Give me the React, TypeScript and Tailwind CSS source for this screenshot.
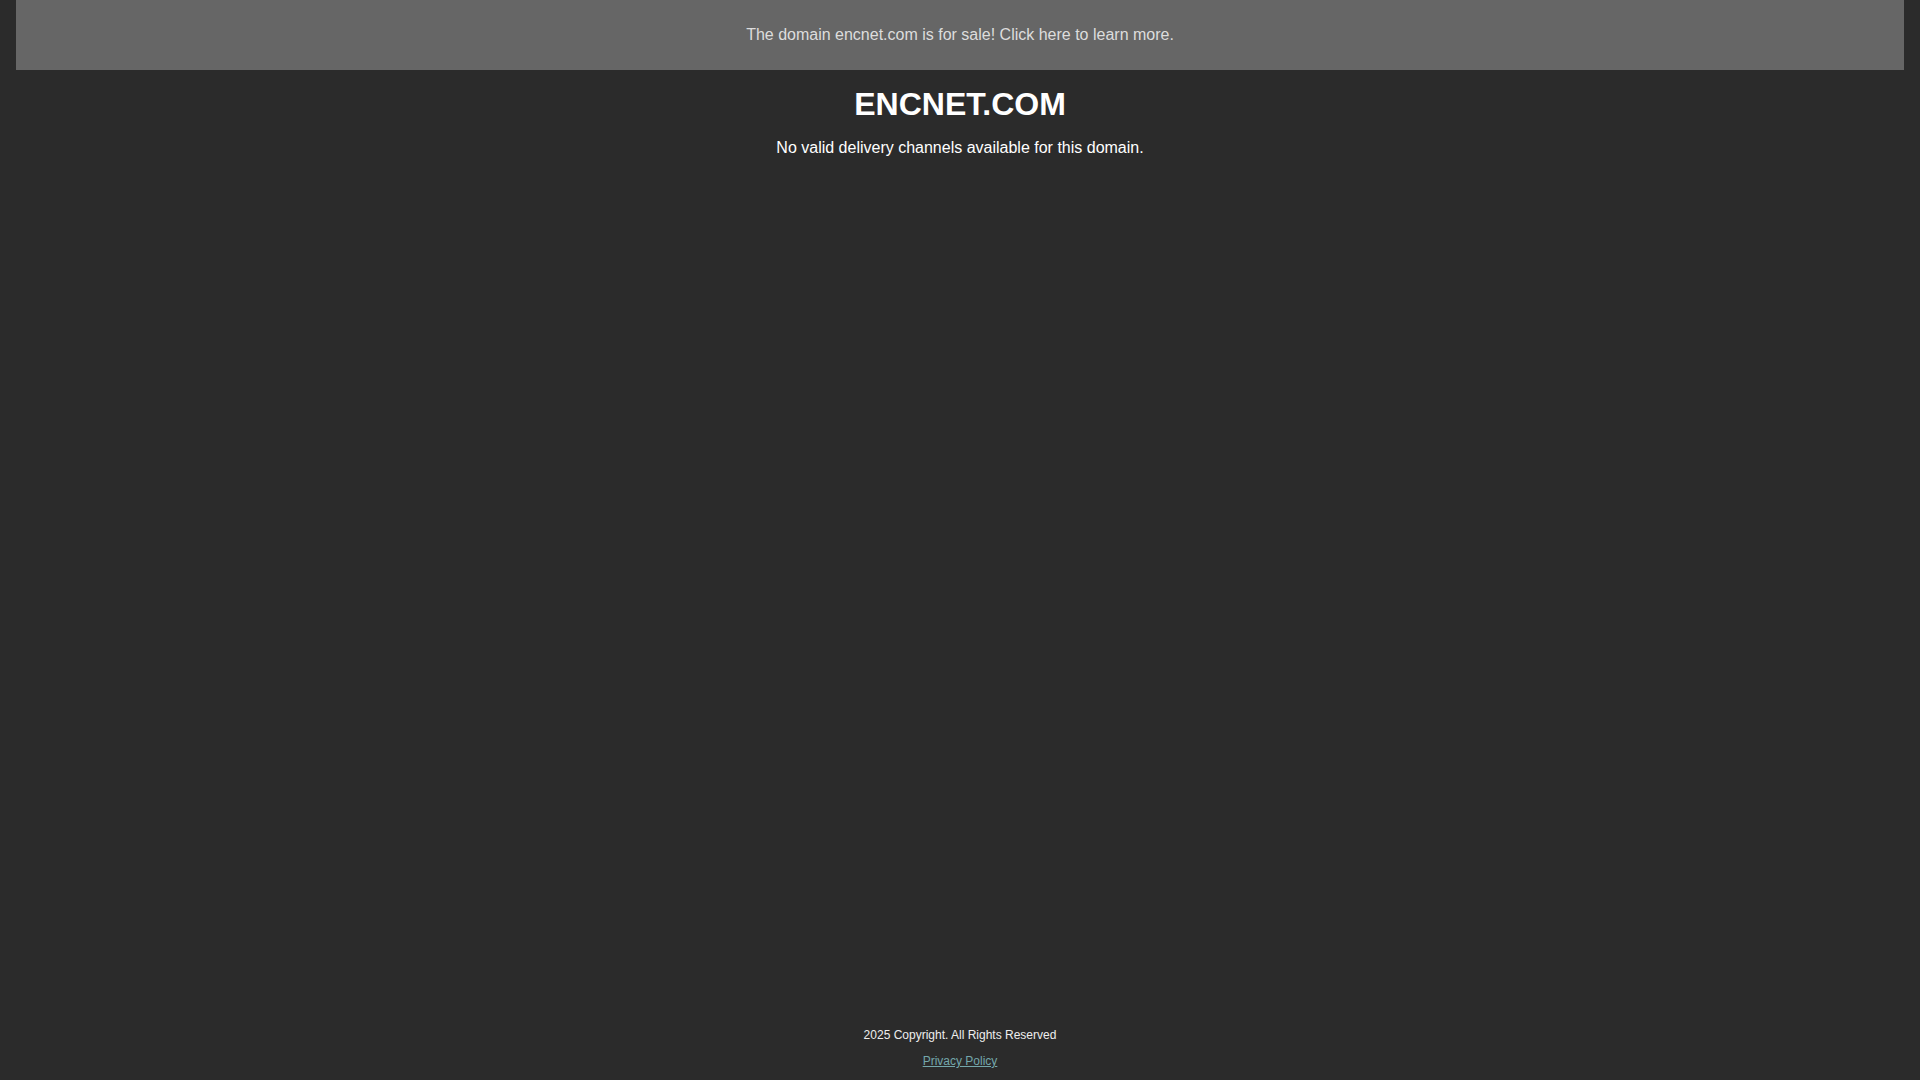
import React from "react";

const App = () => {
  return (
    <div className="min-h-screen bg-[#2b2b2b] flex flex-col font-['Liberation_Sans',Arial,sans-serif]">
      <a href="#" className="mx-[16px] h-[70px] bg-[#666666] flex items-center justify-center text-[16px] text-[#dddddd]">
        The domain encnet.com is for sale! Click here to learn more.
      </a>

      <main className="flex flex-col items-center text-white">
        <h1 className="mt-[16px] text-[32px] leading-[37px] font-bold">ENCNET.COM</h1>
        <p className="mt-[16px] text-[16px] leading-[18px]">No valid delivery channels available for this domain.</p>
      </main>

      <footer className="mt-auto pb-[12px] flex flex-col items-center gap-[12px] text-[12px] leading-[14px]">
        <span className="text-[#eeeeee]">2025 Copyright. All Rights Reserved</span>
        <a href="#" className="text-[#74a7ab] underline">Privacy Policy</a>
      </footer>
    </div>
  );
};

export default App;
